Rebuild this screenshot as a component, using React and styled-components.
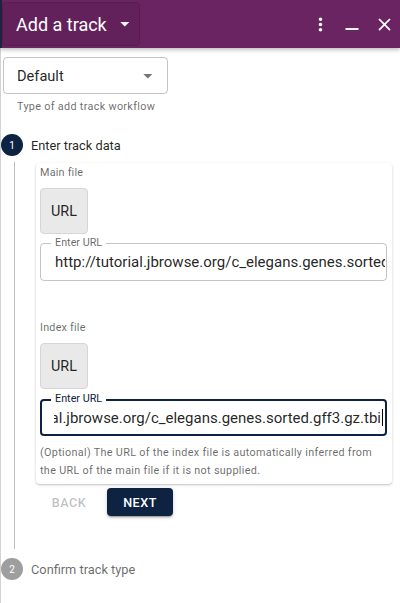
import styled, { createGlobalStyle } from 'styled-components';

const NAVY = '#0e2341';

const GlobalStyle = createGlobalStyle`
  html, body {
    margin: 0;
    padding: 0;
    background: #fff;
  }
  body {
    font-family: Roboto, 'Liberation Sans', sans-serif;
  }
`;

function ArrowDrop({ color, size }) {
  return (
    <svg width={size} height={size} viewBox='0 0 24 24' fill={color}>
      <path d='M7 10l5 5 5-5z' />
    </svg>
  );
}

export default function App() {
  return (
    <Frame>
      <GlobalStyle />
      <Header>
        <TitleButton>
          Add a track
          <ArrowDrop color='#fff' size={21.6} />
        </TitleButton>
        <Spacer />
        <IconButton aria-label='more'>
          <svg width='21' height='21' viewBox='0 0 24 24' fill='#fff'>
            <path d='M12 8c1.1 0 2-.9 2-2s-.9-2-2-2-2 .9-2 2 .9 2 2 2zm0 2c-1.1 0-2 .9-2 2s.9 2 2 2 2-.9 2-2-.9-2-2-2zm0 6c-1.1 0-2 .9-2 2s.9 2 2 2 2-.9 2-2-.9-2-2-2z' />
          </svg>
        </IconButton>
        <IconButton aria-label='minimize'>
          <svg width='14' height='20' viewBox='0 0 14 20' fill='#fff'>
            <rect x='0.5' y='14' width='13' height='2' />
          </svg>
        </IconButton>
        <IconButton aria-label='close'>
          <svg width='21' height='21' viewBox='0 0 24 24' fill='#fff'>
            <path d='M19 6.41L17.59 5 12 10.59 6.41 5 5 6.41 10.59 12 5 17.59 6.41 19 12 13.41 17.59 19 19 17.59 13.41 12z' />
          </svg>
        </IconButton>
      </Header>

      <Body>
        <Select>
          Default
          <ArrowDrop color='#757575' size={21.6} />
        </Select>
        <Helper className='workflow'>Type of add track workflow</Helper>

        <StepHeader>
          <StepIcon $active>1</StepIcon>
          <StepLabel $active>Enter track data</StepLabel>
        </StepHeader>
        <StepContent>
          <Card>
            <FileLabel>Main file</FileLabel>
            <ToggleButton>URL</ToggleButton>
            <Field>
              <FieldLabel>Enter URL</FieldLabel>
              <FieldValue>http://tutorial.jbrowse.org/c_elegans.genes.sorted.gff3.gz</FieldValue>
            </Field>

            <FileLabel className='index'>Index file</FileLabel>
            <ToggleButton>URL</ToggleButton>
            <Field $focused>
              <FieldLabel $focused>Enter URL</FieldLabel>
              <FieldValue $focused>
                <span>http://tutorial.jbrowse.org/c_elegans.genes.sorted.gff3.gz.tbi</span>
                <Caret />
              </FieldValue>
            </Field>
            <Helper className='optional'>
              (Optional) The URL of the index file is automatically inferred from the URL of the main
              file if it is not supplied.
            </Helper>
          </Card>

          <Actions>
            <TextButton disabled>Back</TextButton>
            <ContainedButton>Next</ContainedButton>
          </Actions>
        </StepContent>

        <StepHeader className='last'>
          <StepIcon>2</StepIcon>
          <StepLabel>Confirm track type</StepLabel>
        </StepHeader>
      </Body>
    </Frame>
  );
}

const Frame = styled.div`
  display: flex;
  flex-direction: column;
  width: 400px;
  height: 603px;
  overflow: hidden;
`;

const Header = styled.header`
  position: relative;
  z-index: 1;
  display: flex;
  align-items: stretch;
  flex-shrink: 0;
  height: 48px;
  box-sizing: border-box;
  padding: 2px 0;
  background: #6a2461;
  border-left: 2px solid #1c2540;
  box-shadow: 0 2px 4px rgba(0, 0, 0, 0.25);
`;

const TitleButton = styled.div`
  display: flex;
  align-items: center;
  padding: 0 4px 0 13px;
  border: 1px solid #561c4f;
  border-radius: 4px;
  background: #63215b;
  color: #fff;
  font-size: 18px;

  svg {
    margin-left: 7px;
  }
`;

const Spacer = styled.div`
  flex: 1;
`;

const IconButton = styled.div`
  display: flex;
  align-items: center;
  justify-content: center;
  width: 32px;
`;

const Body = styled.main`
  flex: 1;
  display: flex;
  flex-direction: column;
  align-items: flex-start;
  padding: 9px 8px 0 0;
  border-left: 1px solid #d3d3d3;
`;

const Select = styled.div`
  display: flex;
  align-items: center;
  justify-content: space-between;
  width: 165px;
  height: 37px;
  box-sizing: border-box;
  margin-left: 2px;
  padding: 0 8px 0 13px;
  border: 1px solid rgba(0, 0, 0, 0.23);
  border-radius: 4px;
  color: rgba(0, 0, 0, 0.87);
  font-size: 14.6px;
`;

const Helper = styled.p`
  margin: 0;
  color: rgba(0, 0, 0, 0.6);
  font-size: 10.8px;
  line-height: 18px;
  letter-spacing: 0.03em;

  &.workflow {
    margin: 4px 0 0 16px;
  }

  &.optional {
    margin-top: 8px;
  }
`;

const StepHeader = styled.div`
  display: flex;
  align-items: center;
  margin-top: 18px;

  &.last {
    margin-top: 9px;
  }
`;

const StepIcon = styled.div`
  display: flex;
  align-items: center;
  justify-content: center;
  width: 22px;
  height: 22px;
  border-radius: 50%;
  background: ${(p) => (p.$active ? NAVY : '#9e9e9e')};
  color: #fff;
  font-size: 10px;
`;

const StepLabel = styled.span`
  margin-left: 8px;
  color: ${(p) => (p.$active ? 'rgba(0, 0, 0, 0.87)' : 'rgba(0, 0, 0, 0.6)')};
  font-size: 12.8px;
`;

const StepContent = styled.div`
  align-self: stretch;
  margin: 6px 0 0 13px;
  padding: 1px 0 33px 21px;
  border-left: 1px solid #bdbdbd;
`;

const Card = styled.section`
  display: flex;
  flex-direction: column;
  align-items: flex-start;
  padding: 1px 5px 4px 4px;
  border-radius: 4px;
  background: #fff;
  box-shadow: 0 1px 3px rgba(0, 0, 0, 0.18), 0 1px 1px rgba(0, 0, 0, 0.08);
`;

const FileLabel = styled.div`
  color: rgba(0, 0, 0, 0.6);
  font-size: 10.8px;
  line-height: 18px;
  letter-spacing: 0.02em;

  &.index {
    margin-top: 38px;
  }
`;

const ToggleButton = styled.div`
  display: flex;
  align-items: center;
  justify-content: center;
  width: 48px;
  height: 46px;
  box-sizing: border-box;
  margin-top: 6px;
  border: 1px solid #d6d6d6;
  border-radius: 4px;
  background: #e9e9e9;
  color: rgba(0, 0, 0, 0.87);
  font-size: 14.4px;
  font-weight: 400;
`;

const Field = styled.div`
  position: relative;
  display: flex;
  align-items: center;
  align-self: stretch;
  height: ${(p) => (p.$focused ? '37px' : '38px')};
  box-sizing: border-box;
  margin-top: ${(p) => (p.$focused ? '10px' : '9px')};
  border: ${(p) => (p.$focused ? `2px solid ${NAVY}` : '1px solid rgba(0, 0, 0, 0.23)')};
  border-radius: 4px;
`;

const FieldLabel = styled.span`
  position: absolute;
  top: ${(p) => (p.$focused ? '-8px' : '-7px')};
  left: ${(p) => (p.$focused ? '9px' : '10px')};
  padding: 0 4px;
  background: #fff;
  color: ${(p) => (p.$focused ? NAVY : 'rgba(0, 0, 0, 0.6)')};
  font-size: 10.8px;
  line-height: 12px;
`;

const FieldValue = styled.div`
  display: flex;
  align-items: center;
  justify-content: ${(p) => (p.$focused ? 'flex-end' : 'flex-start')};
  flex: 1;
  min-width: 0;
  margin: ${(p) => (p.$focused ? '0 2px 0 12px' : '0 1px 0 14px')};
  overflow: hidden;
  white-space: nowrap;
  color: rgba(0, 0, 0, 0.87);
  font-size: 15px;

  span {
    flex-shrink: 0;
  }
`;

const Caret = styled.i`
  flex-shrink: 0;
  width: 1px;
  height: 17px;
  margin-left: 1px;
  background: #000;
`;

const Actions = styled.div`
  display: flex;
  align-items: center;
  gap: 9px;
  margin: 4px 0 0 4px;
`;

const TextButton = styled.button`
  width: 58px;
  height: 28px;
  padding: 0;
  border: none;
  background: transparent;
  color: rgba(0, 0, 0, 0.26);
  font-family: inherit;
  font-size: 12.6px;
  font-weight: 500;
  letter-spacing: 0.04em;
  text-transform: uppercase;
`;

const ContainedButton = styled.button`
  width: 66px;
  height: 28px;
  padding: 0;
  border: none;
  border-radius: 4px;
  background: ${NAVY};
  color: #fff;
  font-family: inherit;
  font-size: 12.6px;
  font-weight: 500;
  letter-spacing: 0.04em;
  text-transform: uppercase;
  box-shadow: 0 3px 1px -2px rgba(0, 0, 0, 0.2), 0 2px 2px rgba(0, 0, 0, 0.14),
    0 1px 5px rgba(0, 0, 0, 0.12);
`;
